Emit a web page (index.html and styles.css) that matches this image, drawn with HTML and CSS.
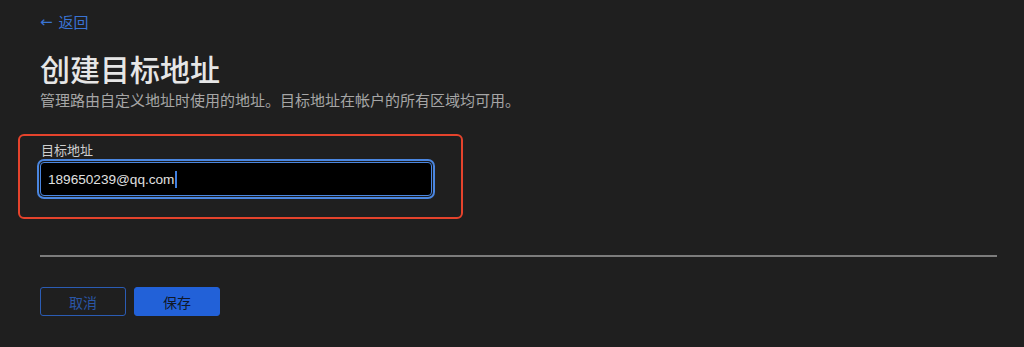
FILE: index.html
```html
<!DOCTYPE html>
<html lang="zh-CN">
<head>
<meta charset="utf-8">
<title>创建目标地址</title>
<link rel="stylesheet" href="styles.css">
</head>
<body>
<div class="page">
  <a class="back" href="#"><span class="arrow">←</span><span>返回</span></a>
  <h1 class="title">创建目标地址</h1>
  <p class="subtitle">管理路由自定义地址时使用的地址。目标地址在帐户的所有区域均可用。</p>
  <div class="field-box">
    <label class="field-label">目标地址</label>
    <div class="input"><span class="value">189650239@qq.com</span><span class="caret"></span></div>
  </div>
  <hr class="divider">
  <div class="actions">
    <button class="btn btn-cancel">取消</button>
    <button class="btn btn-save">保存</button>
  </div>
</div>
</body>
</html>
```
FILE: styles.css
```css
html, body {
  margin: 0;
  padding: 0;
  background: #1f1f1f;
  height: 100%;
}
body {
  font-family: "Noto Sans CJK SC", "Noto Sans", sans-serif;
  color: #e4e4e4;
}
.page {
  padding: 12px 28px 0 40px;
}
.back {
  display: flex;
  align-items: center;
  gap: 6px;
  height: 20px;
  line-height: 20px;
  font-size: 15px;
  color: #3a74d4;
  text-decoration: none;
}
.arrow {
  font-family: "DejaVu Sans", sans-serif;
  font-size: 15px;
}
.title {
  margin: 18px 0 0;
  font-size: 30px;
  line-height: 36px;
  font-weight: 500;
  color: #e6e6e6;
}
.subtitle {
  margin: 4px 0 0;
  font-size: 15px;
  line-height: 20px;
  color: #a6a6a6;
}
.field-box {
  margin: 24px 0 0 -22px;
  width: 421px;
  height: 75px;
  border: 2px solid #e5432c;
  border-radius: 6px;
  padding: 6px 0 0 20px;
}
.field-label {
  display: block;
  height: 16px;
  line-height: 16px;
  font-size: 13px;
  color: #cfcfcf;
  padding-left: 1px;
}
.input {
  margin-top: 4px;
  width: 392px;
  height: 34px;
  box-sizing: border-box;
  background: #000;
  border: 1px solid #4a86e0;
  border-radius: 4px;
  box-shadow: 0 0 0 1px #1a1a1a, 0 0 0 3px #4a86e0;
  display: flex;
  align-items: center;
  padding-left: 7px;
}
.value {
  font-family: "Liberation Sans", "Noto Sans", sans-serif;
  font-size: 13.6px;
  color: #e0e0e0;
}
.caret {
  width: 2px;
  height: 17px;
  background: #3f7fe0;
  margin-left: 1px;
}
.divider {
  margin: 36px 0 0;
  border: 0;
  height: 2px;
  background: #7c7c7c;
  width: 957px;
}
.actions {
  margin-top: 30px;
  display: flex;
  gap: 8px;
}
.btn {
  width: 86px;
  height: 29px;
  border-radius: 3px;
  font-family: "Noto Sans CJK SC", sans-serif;
  font-size: 14px;
  box-sizing: border-box;
  padding: 0;
}
.btn-cancel {
  background: transparent;
  border: 1px solid #2b5cb4;
  color: #2a56a6;
}
.btn-save {
  background: #2261d8;
  border: 1px solid #2261d8;
  color: #111827;
}
```
